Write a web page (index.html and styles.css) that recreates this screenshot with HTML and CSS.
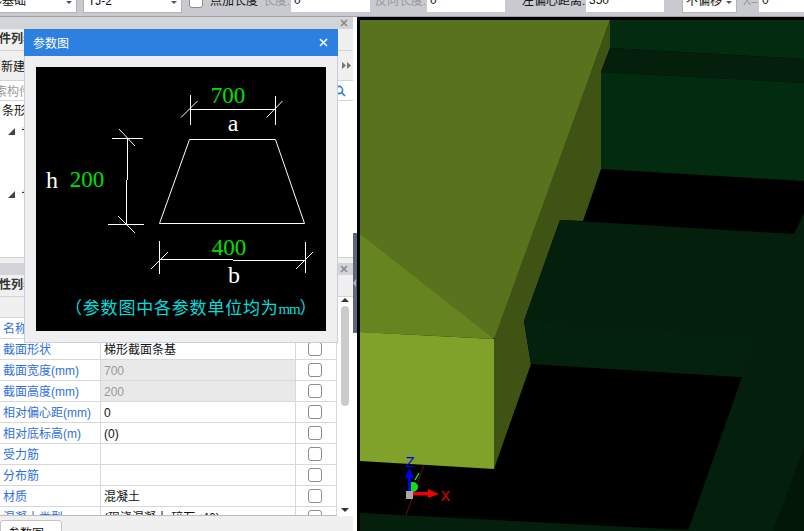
FILE: index.html
```html
<!DOCTYPE html>
<html lang="zh-CN">
<head>
  <meta charset="UTF-8">
  <title>参数图</title>
  <link rel="stylesheet" href="styles.css">
</head>
<body>
  <div class="toolbar">
    <div class="select sel-type"><span class="cut-type">条形基础</span><i class="caret"></i></div>
    <div class="select sel-name"><span>TJ-2</span><i class="caret"></i></div>
    <div class="check tool-check"></div>
    <span class="tool-label lbl-point">点加长度</span>
    <span class="tool-label off lbl-len">长度:</span>
    <div class="tool-input in-len">0</div>
    <span class="tool-label off lbl-rev">反向长度:</span>
    <div class="tool-input in-rev">0</div>
    <span class="tool-label lbl-offset">左偏心距离:</span>
    <div class="tool-input in-offset">350</div>
    <div class="select sel-shift"><span>不偏移</span><i class="caret"></i></div>
    <span class="tool-label off lbl-x">X=</span>
    <div class="tool-input in-x">0</div>
  </div>

  <div class="main">
    <div class="left">
      <div class="panel-top">
        <div class="band"><svg class="close-x" viewBox="0 0 8 8"><path d="M1 1L7 7M7 1L1 7"/></svg></div>
        <div class="title-row"><span class="shift-title">构件列表</span></div>
        <div class="new-row">
          <span>新建</span>
          <svg class="more" viewBox="0 0 9 7"><path d="M0 0L4 3.5L0 7ZM5 0L9 3.5L5 7Z"/></svg>
        </div>
        <div class="search-row">
          <span class="shift-search">搜索构件</span>
          <svg class="search-icon" viewBox="0 0 12 12"><circle cx="5" cy="5" r="3.6"/><path d="M7.6 7.6L11 11"/></svg>
        </div>
        <div class="tree">
          <div class="tree-head">条形基础</div>
          <div class="tree-node node-one"><svg class="arrow" viewBox="0 0 7 7"><path d="M7 0V7H0Z"/></svg><i class="folder"></i></div>
          <div class="tree-node node-two"><svg class="arrow" viewBox="0 0 7 7"><path d="M7 0V7H0Z"/></svg><i class="folder"></i></div>
        </div>
      </div>

      <div class="panel-props">
        <div class="band"><svg class="close-x" viewBox="0 0 8 8"><path d="M1 1L7 7M7 1L1 7"/></svg></div>
        <div class="title-row"><span class="shift-title">属性列表</span></div>
        <div class="props-body">
          <div class="props-table">
            <div class="props-tools"></div>
            <div class="rows">
              <div class="row"><div class="name">名称</div><div class="value">TJ-2</div><div class="tick"><div class="check"></div></div></div>
              <div class="row"><div class="name">截面形状</div><div class="value">梯形截面条基</div><div class="tick"><div class="check"></div></div></div>
              <div class="row"><div class="name">截面宽度(mm)</div><div class="value locked">700</div><div class="tick"><div class="check"></div></div></div>
              <div class="row"><div class="name">截面高度(mm)</div><div class="value locked">200</div><div class="tick"><div class="check"></div></div></div>
              <div class="row"><div class="name">相对偏心距(mm)</div><div class="value">0</div><div class="tick"><div class="check"></div></div></div>
              <div class="row"><div class="name">相对底标高(m)</div><div class="value">(0)</div><div class="tick"><div class="check"></div></div></div>
              <div class="row"><div class="name">受力筋</div><div class="value"></div><div class="tick"><div class="check"></div></div></div>
              <div class="row"><div class="name">分布筋</div><div class="value"></div><div class="tick"><div class="check"></div></div></div>
              <div class="row"><div class="name">材质</div><div class="value">混凝土</div><div class="tick"><div class="check"></div></div></div>
              <div class="row"><div class="name">混凝土类型</div><div class="value">(现浇混凝土 碎石&lt;40)</div><div class="tick"><div class="check"></div></div></div>
            </div>
          </div>
          <div class="scrollbar">
            <i class="scroll-up"></i>
            <div class="thumb"></div>
            <i class="scroll-down"></i>
          </div>
        </div>
      </div>

      <div class="tabs"><div class="tab">参数图</div></div>
    </div>

    <div class="splitter"><div class="grip"><i class="grip-arrow"></i></div></div>

    <div class="view">
      <svg class="scene" viewBox="357 17 447 514">
        <rect x="357" y="17" width="447" height="514" fill="#000"/>
        <polygon points="360,20 610,20 496,338 360,332" fill="#58721e"/>
        <polygon points="360,234 494,339 360,332" fill="#66841f"/>
        <polygon points="360,332 494,339 494,469 360,461" fill="#80a22a"/>
        <polygon points="610,20 610,48 601,72 601,169 583,221 560,220 524,321 531,364 494,469 494,339" fill="#3f5314"/>
        <polygon points="610,20 804,20 804,59 610,48" fill="#032b0f"/>
        <polygon points="610,48 804,59 804,83 601,72" fill="#041f0c"/>
        <polygon points="601,72 804,83 804,181 601,169" fill="#032b0f"/>
        <polygon points="560,220 794,234 804,213 804,531 688,531 742,377 531,364 524,321" fill="#041f0c"/>
        <polygon points="524,321 755,337 742,377 531,364" fill="#04210d"/>
        <polygon points="804,448 804,531 773,531" fill="#021708"/>
        <polygon points="360,513 688,530 688,531 360,531" fill="#041f0c"/>

        <line x1="424" y1="465" x2="406" y2="515" stroke="#6a0f14" stroke-width="1"/>
        <line x1="415" y1="480" x2="419" y2="473" stroke="#1fe01f" stroke-width="1.5"/>
        <ellipse cx="413" cy="487" rx="5" ry="5" fill="#10e010"/>
        <rect x="408" y="476" width="3" height="15" fill="#0000f0"/>
        <polygon points="409.5,468 414,478 405,478" fill="#0000f0"/>
        <rect x="406" y="491" width="7" height="8" fill="#a8a8a8"/>
        <rect x="413" y="492" width="16" height="3.5" fill="#f00000"/>
        <polygon points="428,489 439,494 428,498" fill="#f00000"/>
        <text class="axis axis-z" x="410" y="467" text-anchor="middle">Z</text>
        <text class="axis axis-x" x="445.5" y="501" text-anchor="middle">X</text>
      </svg>
    </div>
  </div>

  <div class="dialog">
    <div class="dialog-head">
      <span>参数图</span>
      <svg class="dialog-close" viewBox="0 0 9 9"><path d="M1 1L8 8M8 1L1 8"/></svg>
    </div>
    <div class="dialog-body">
      <svg class="figure" viewBox="36 67 290 264">
        <g class="draw">
          <path d="M190.5 95V125M275.5 96V125M190.5 109.5H275.5M181 117.5L197.5 101M266.5 117.5L282.5 101"/>
          <path d="M189.5 139.5H275.5L304.5 223.5H159.5Z"/>
          <path d="M127.5 138.5V180M126.5 180V224.5M112 138.5H143M108 224.5H144M119 129L135 146M118 216L135 233"/>
          <path d="M159.5 241V274M305.5 242V273M159.5 259.5H233M233 260.5H305.5M151 269L168 252M296 269L313 252"/>
        </g>
        <text class="dim" x="228" y="103" text-anchor="middle">700</text>
        <text class="dim" x="87" y="187" text-anchor="middle">200</text>
        <text class="dim" x="229" y="255" text-anchor="middle">400</text>
        <text class="sym" x="233" y="131" text-anchor="middle">a</text>
        <text class="sym" x="52" y="188" text-anchor="middle">h</text>
        <text class="sym" x="234" y="283" text-anchor="middle">b</text>
        <text class="note" x="65" y="314">（参数图中各参数单位均为<tspan class="note-unit">mm</tspan>）</text>
      </svg>
    </div>
  </div>
</body>
</html>
```

FILE: styles.css
```css
html, body {
  margin: 0;
  padding: 0;
}
body {
  position: relative;
  width: 804px;
  height: 531px;
  overflow: hidden;
  font-family: "Liberation Sans", "Noto Sans CJK SC", sans-serif;
  font-size: 12px;
  color: #111;
  background: #fff;
}

/* top bar, only the bottom of it is on screen */
.toolbar {
  display: flex;
  align-items: flex-end;
  height: 17px;
  padding-bottom: 3px;
  box-sizing: border-box;
  background: #c8cad0;
  border-bottom: 1px solid #a0a2a6;
  overflow: hidden;
}
.select {
  flex: none;
  display: flex;
  justify-content: space-between;
  align-items: center;
  height: 24px;
  line-height: 24px;
  box-sizing: border-box;
  padding: 0 4px 0 4px;
  background: #fff;
  border: 1px solid #b4b4b4;
  overflow: hidden;
  white-space: nowrap;
}
.caret {
  flex: none;
  margin-top: 3px;
  border-left: 3px solid transparent;
  border-right: 3px solid transparent;
  border-top: 3px solid #555;
}
.sel-type { width: 77px; padding-left: 0; border-left: 0; }
.cut-type { margin-left: -22px; }
.sel-name { width: 99px; margin-left: 6px; }
.sel-shift { width: 55px; margin-left: 18px; padding-left: 3px; }
.check {
  flex: none;
  width: 14px;
  height: 14px;
  box-sizing: border-box;
  background: #fff;
  border: 1px solid #8c8c8c;
  border-radius: 3px;
}
.tool-check { margin-left: 7px; margin-bottom: 5px; }
.tool-label {
  flex: none;
  height: 24px;
  line-height: 24px;
  white-space: nowrap;
}
.tool-label.off { color: #999; }
.lbl-point { margin-left: 7px; width: 52px; }
.lbl-len { margin-left: 1px; width: 28px; }
.lbl-rev { margin-left: 5px; width: 52px; }
.lbl-offset { margin-left: 17px; width: 64px; }
.lbl-x { margin-left: 6px; width: 16px; }
.tool-input {
  flex: none;
  height: 24px;
  line-height: 24px;
  box-sizing: border-box;
  padding-left: 3px;
  margin-bottom: 1px;
  background: #fff;
}
.in-len { width: 79px; }
.in-rev { width: 78px; }
.in-offset { width: 78px; }
.in-x { width: 45px; }

.main {
  display: flex;
  height: 514px;
}
.left {
  flex: none;
  display: flex;
  flex-direction: column;
  width: 353px;
  background: #f0f0f0;
}
.band {
  flex: none;
  display: flex;
  justify-content: flex-end;
  align-items: center;
  height: 12px;
  padding-right: 5px;
  background: #d2d4d9;
}
.close-x {
  width: 8px;
  height: 8px;
  fill: none;
  stroke: #888;
  stroke-width: 1.6;
}
.title-row {
  flex: none;
  height: 21px;
  line-height: 21px;
  background: #f0f0f0;
  border-bottom: 1px solid #d4d4d4;
  overflow: hidden;
  font-weight: bold;
  color: #333;
}
.shift-title { margin-left: -13px; }

.panel-top {
  flex: none;
  height: 241px;
  display: flex;
  flex-direction: column;
  background: #fff;
}
.new-row {
  flex: none;
  display: flex;
  justify-content: space-between;
  align-items: center;
  height: 29px;
  padding: 0 2px 0 1px;
  background: #f0f0f0;
  border-bottom: 1px solid #d4d4d4;
}
.more {
  width: 9px;
  height: 7px;
  fill: #777;
}
.search-row {
  flex: none;
  display: flex;
  justify-content: space-between;
  align-items: center;
  height: 19px;
  padding-right: 7px;
  border-bottom: 1px solid #d4d4d4;
  color: #999;
  overflow: hidden;
}
.shift-search { margin-left: -17px; }
.search-icon {
  width: 12px;
  height: 12px;
  fill: none;
  stroke: #2b7fd6;
  stroke-width: 1.6;
}
.tree {
  flex: 1;
  border-bottom: 1px solid #d0d0d0;
}
.tree-head {
  height: 20px;
  line-height: 20px;
  padding-left: 2px;
  overflow: hidden;
}
.tree-node {
  display: flex;
  align-items: center;
  gap: 4px;
  height: 14px;
  padding-left: 8px;
}
.node-one { margin-top: 3px; }
.node-two { margin-top: 49px; }
.arrow {
  width: 7px;
  height: 7px;
  fill: #444;
}
.folder {
  width: 2px;
  height: 10px;
  margin-left: 3px;
  background: linear-gradient(#fff 10%, #f4e4a0 10%, #f4e4a0 30%, #333 30%, #333 40%, #fff 40%);
}

.panel-props {
  flex: 1;
  display: flex;
  flex-direction: column;
  min-height: 0;
  margin-top: 5px;
  background: #f0f0f0;
}
.props-body {
  flex: 1;
  display: flex;
  min-height: 0;
}
.props-table {
  flex: none;
  display: flex;
  flex-direction: column;
  width: 337px;
  border-bottom: 1px solid #bdbdbd;
}
.props-tools {
  flex: none;
  height: 20px;
  background: #f0f0f0;
  border-bottom: 1px solid #d4d4d4;
}
.rows {
  flex: 1;
  overflow: hidden;
  background: #fff;
}
.row {
  display: flex;
  height: 21px;
  line-height: 22px;
  box-sizing: border-box;
  border-bottom: 1px solid #d8d8d8;
}
.name {
  flex: none;
  width: 101px;
  padding-left: 3px;
  box-sizing: border-box;
  color: #2f6fdc;
  border-right: 1px solid #d8d8d8;
  white-space: nowrap;
  overflow: hidden;
}
.value {
  flex: none;
  width: 195px;
  padding-left: 3px;
  box-sizing: border-box;
  border-right: 1px solid #d8d8d8;
  white-space: nowrap;
}
.value.locked {
  background: #e9e9e9;
  color: #999;
}
.tick {
  flex: 1;
  display: flex;
  justify-content: center;
  align-items: center;
  padding-right: 2px;
  border-right: 1px solid #d8d8d8;
}
.scrollbar {
  flex: none;
  display: flex;
  flex-direction: column;
  align-items: center;
  width: 16px;
  box-sizing: border-box;
  padding: 1px 0 4px;
  background: #fff;
}
.scroll-up,
.scroll-down {
  flex: none;
  border-left: 4px solid transparent;
  border-right: 4px solid transparent;
}
.scroll-up { border-bottom: 4px solid #333; }
.scroll-down { margin-top: auto; border-top: 4px solid #333; }
.thumb {
  flex: none;
  width: 8px;
  height: 100px;
  margin-top: 4px;
  background: #cbcbcb;
  border-radius: 4px;
}

.tabs {
  flex: none;
  height: 15px;
  background: #f0f0f0;
  overflow: hidden;
}
.tab {
  width: 62px;
  height: 24px;
  line-height: 26px;
  margin-top: 4px;
  padding-left: 7px;
  box-sizing: border-box;
  background: #fff;
  border: 1px solid #c4c4c4;
  border-radius: 3px 3px 0 0;
}

.splitter {
  flex: none;
  display: flex;
  flex-direction: column;
  width: 4px;
  padding-top: 216px;
  box-sizing: border-box;
  background: #fff;
}
.grip {
  display: flex;
  align-items: flex-end;
  height: 100px;
  background: #5c6877;
}
.grip-arrow {
  margin-bottom: 46px;
  border-top: 4px solid transparent;
  border-bottom: 4px solid transparent;
  border-right: 3px solid #aab2bc;
}
.view {
  flex: 1;
  min-width: 0;
}
.scene {
  display: block;
  width: 447px;
  height: 514px;
}
.axis {
  font-family: "Liberation Sans", sans-serif;
}
.axis-z { font-size: 15px; fill: #0000f0; }
.axis-x { font-size: 14px; fill: #f00000; }

/* floating dialog */
.dialog {
  position: absolute;
  left: 24px;
  top: 29px;
  width: 314px;
  height: 314px;
  box-sizing: border-box;
  background: #efefef;
  border: 1px solid #c6cfdf;
  border-top: 0;
}
.dialog-head {
  display: flex;
  justify-content: space-between;
  align-items: center;
  height: 27px;
  margin: 0 -1px;
  padding: 0 10px 0 9px;
  background: #2e80e0;
  color: #fff;
  font-size: 12px;
}
.dialog-close {
  width: 9px;
  height: 9px;
  fill: none;
  stroke: #fff;
  stroke-width: 1.5;
}
.dialog-body {
  padding: 11px;
}
.figure {
  display: block;
  width: 290px;
  height: 264px;
  background: #000;
}
.draw path {
  fill: none;
  stroke: #fff;
  stroke-width: 1;
}
.dim {
  font-family: "Liberation Serif", serif;
  font-size: 23px;
  fill: #00e000;
}
.sym {
  font-family: "Liberation Serif", serif;
  font-size: 24px;
  fill: #fff;
}
.note {
  font-family: "Noto Sans CJK SC", sans-serif;
  font-size: 17px;
  letter-spacing: 0.8px;
  fill: #00dede;
}
.note-unit {
  font-family: "Liberation Serif", serif;
  font-size: 15px;
  letter-spacing: -1.2px;
}
```
